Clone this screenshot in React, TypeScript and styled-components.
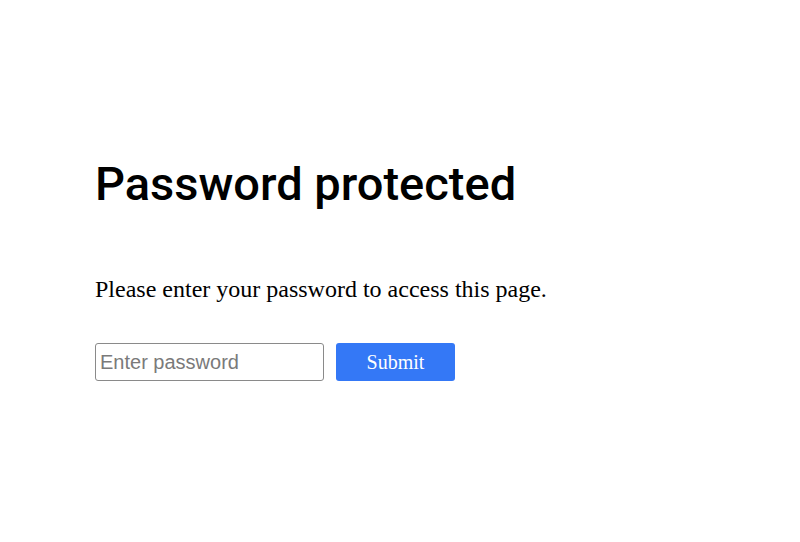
import React from "react";
import styled, { createGlobalStyle } from "styled-components";

const Global = createGlobalStyle`
  html, body { margin: 0; padding: 0; background: #ffffff; }
  body { font-family: "Liberation Serif", "Times New Roman", serif; color: #000; }
`;

const Page = styled.main`
  padding: 152px 0 0 95px;
  display: flex;
  flex-direction: column;
`;

const Title = styled.h1`
  margin: 0;
  font-family: Roboto, "Liberation Sans", Arial, sans-serif;
  font-weight: 500;
  font-size: 47px;
  line-height: 64px;
  color: #000;
`;

const Lead = styled.p`
  margin: 58px 0 0;
  font-size: 24px;
  line-height: 30px;
`;

const Form = styled.form`
  margin-top: 39px;
  display: flex;
  gap: 12px;
  align-items: stretch;
`;

const Input = styled.input`
  box-sizing: border-box;
  width: 229px;
  height: 38px;
  padding: 0 4px;
  border: 1.5px solid #8a8a8a;
  border-radius: 3px;
  font-family: "Liberation Sans", Arial, sans-serif;
  font-size: 20px;
  color: #000;
  outline: none;
  &::placeholder { color: #7a7a7a; }
`;

const Button = styled.button`
  box-sizing: border-box;
  width: 119px;
  height: 38px;
  border: none;
  border-radius: 3px;
  background: #3478f6;
  color: #fff;
  font-family: "Liberation Serif", "Times New Roman", serif;
  font-size: 20px;
  cursor: pointer;
`;

export default function App() {
  return (
    <>
      <Global />
      <Page>
        <Title>Password protected</Title>
        <Lead>Please enter your password to access this page.</Lead>
        <Form onSubmit={(e) => e.preventDefault()}>
          <Input type="password" placeholder="Enter password" />
          <Button type="submit">Submit</Button>
        </Form>
      </Page>
    </>
  );
}
